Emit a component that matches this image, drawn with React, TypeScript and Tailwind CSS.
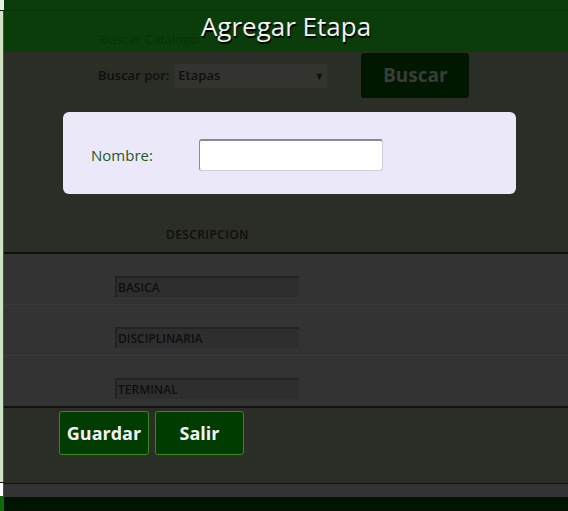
import React from 'react';

const rows = ['BASICA', 'DISCIPLINARIA', 'TERMINAL'];

function LeftStrip() {
  return (
    <div className="flex w-[4px] shrink-0 flex-col">
      <div className="h-[10px] bg-[#e8efe4]" />
      <div className="h-[1px] bg-[#111]" />
      <div className="flex h-[471px] border-r border-[#1c6a1c] bg-[#cfe2c2]" />
      <div className="h-[1px] bg-[#111]" />
      <div className="h-[13px] border-r border-[#1c6a1c] bg-white" />
      <div className="flex-1 bg-[#0e6a0e]" />
    </div>
  );
}

export default function App() {
  return (
    <div
      className="flex h-[511px] w-[568px] overflow-hidden bg-[#2b2d27]"
      style={{ fontFamily: '"Open Sans", "DejaVu Sans", sans-serif' }}
    >
      <LeftStrip />
      <div className="flex flex-1 flex-col">
        {/* header band */}
        <div className="h-[10px] bg-[#0b3c0b]" />
        <div className="relative flex h-[42px] justify-center border-t border-[#082f08] bg-[#0b3d0b]">
          <span className="absolute left-[96px] top-[19px] text-[13px] text-[#063106]">Buscar Catálogo</span>
          <h1
            className="relative mt-[-2px] text-[26px] font-medium leading-[34px] text-[#f2f2f2]"
            style={{ textShadow: '1px 2px 1px #000' }}
          >
            Agregar Etapa
          </h1>
        </div>

        {/* search + dialog area */}
        <div className="flex h-[200px] flex-col">
          <div className="flex items-start pl-[94px] pt-[1px]">
            <div className="mt-[11px] flex items-center">
              <span className="text-[13px] font-semibold text-[#0f0f0f]">Buscar por:</span>
              <div className="ml-[6px] flex h-[24px] w-[152px] items-center justify-between rounded-[2px] bg-[#33342f] pl-[3px] pr-[5px]">
                <span className="text-[13px] font-semibold text-[#0f0f0f]">Etapas</span>
                <span className="text-[8px] text-[#0f0f0f]">▼</span>
              </div>
            </div>
            <div className="ml-[34px] flex h-[45px] w-[108px] items-center justify-center rounded-[3px] bg-[#001800]">
              <span className="text-[19px] font-bold text-[#3a3c38]">Buscar</span>
            </div>
          </div>

          <div className="ml-[59px] mt-[14px] flex h-[82px] w-[453px] items-center rounded-[6px] bg-[#ebe9f9] pl-[28px] pt-[4px]">
            <span className="w-[108px] text-[15px] font-medium text-[#1f5a1f]">Nombre:</span>
            <div className="h-[32px] w-[184px] rounded-[3px] border border-[#cfcde0] border-l-[#8b8a94] border-t-[2px] border-t-[#8b8a94] bg-white" />
          </div>

          <div className="mt-[32px] pl-[162px] text-[12px] font-semibold tracking-[0.4px] text-[#0f0f0f]">DESCRIPCION</div>
        </div>

        {/* table rows */}
        <div className="flex h-[156px] flex-col border-y-2 border-[#111] bg-[#333333]">
          {rows.map((r, i) => (
            <div
              key={r}
              className={`flex flex-1 items-end pb-[7px] pl-[111px] ${i < rows.length - 1 ? 'border-b border-[#3a3a3a]' : ''}`}
            >
              <div className="flex h-[21px] w-[184px] items-center border-l-2 border-t-2 border-[#232323] bg-[#2e2e2e] pl-[1px]">
                <span className="text-[12px] font-semibold text-[#0f0f0f]">{r}</span>
              </div>
            </div>
          ))}
        </div>

        {/* actions */}
        <div className="flex h-[75px] gap-[6px] pl-[55px] pt-[3px]">
          <button className="flex h-[44px] w-[90px] items-center justify-center rounded-[3px] border border-[#3e8a10] bg-[#003c00] text-[18px] font-bold text-[#f2f2f2]">
            Guardar
          </button>
          <button className="flex h-[44px] w-[89px] items-center justify-center rounded-[3px] border border-[#3e8a10] bg-[#003c00] text-[18px] font-bold text-[#f2f2f2]">
            Salir
          </button>
        </div>

        <div className="h-[14px] border-t border-[#111] bg-[#333333]" />
        <div className="flex-1 bg-[#001400]" />
      </div>
    </div>
  );
}
